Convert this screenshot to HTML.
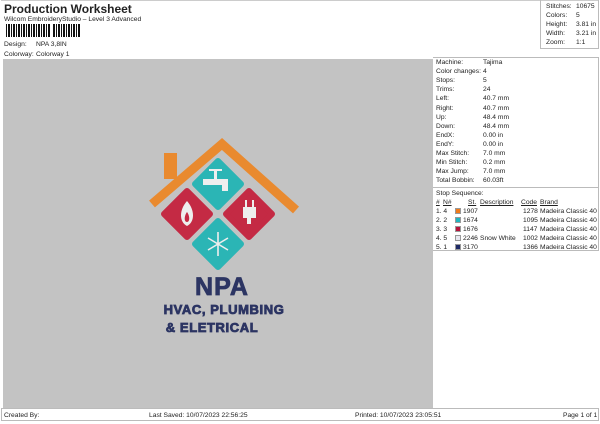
<!DOCTYPE html>
<html><head><meta charset="utf-8"><style>
*{margin:0;padding:0;box-sizing:border-box}
body{width:600px;height:424px;background:#fff;font-family:"Liberation Sans",sans-serif;font-size:6.7px;color:#222;position:relative;overflow:hidden}
.a{position:absolute;white-space:nowrap;line-height:9px}
u{text-decoration:underline}
</style></head><body>
<div class="a" style="left:4px;top:2px;font-size:12px;font-weight:bold;line-height:14px">Production Worksheet</div>
<div class="a" style="left:4px;top:15px">Wilcom EmbroideryStudio – Level 3 Advanced</div>
<div style="position:absolute;left:6px;top:24px;width:74px;height:13px;background:repeating-linear-gradient(90deg,#111 0 1px,#fff 1px 2px,#111 2px 4px,#fff 4px 5px)"></div>
<div style="position:absolute;left:50px;top:24px;width:2px;height:13px;background:#fff"></div>
<div class="a" style="left:4px;top:40px">Design:</div><div class="a" style="left:36px;top:40px">NPA 3,8IN</div>
<div class="a" style="left:4px;top:50px">Colorway:</div><div class="a" style="left:36px;top:50px">Colorway 1</div>
<div style="position:absolute;left:1px;top:0;width:598px;height:1px;background:#ccc"></div>
<div style="position:absolute;left:3px;top:59px;width:430px;height:349px;background:#c3c3c3"></div>
<div style="position:absolute;left:540px;top:0;width:59px;height:49px;border-left:1px solid #bbb;border-right:1px solid #bbb;border-bottom:1px solid #bbb"></div>
<div class="a" style="left:546px;top:2px">Stitches:</div><div class="a" style="left:576px;top:2px">10675</div>
<div class="a" style="left:546px;top:11px">Colors:</div><div class="a" style="left:576px;top:11px">5</div>
<div class="a" style="left:546px;top:20px">Height:</div><div class="a" style="left:576px;top:20px">3.81 in</div>
<div class="a" style="left:546px;top:29px">Width:</div><div class="a" style="left:576px;top:29px">3.21 in</div>
<div class="a" style="left:546px;top:38px">Zoom:</div><div class="a" style="left:576px;top:38px">1:1</div>
<div style="position:absolute;left:433px;top:57px;width:166px;height:1px;background:#bbb"></div>
<div style="position:absolute;left:598px;top:57px;width:1px;height:194px;background:#bbb"></div>
<div style="position:absolute;left:433px;top:187px;width:166px;height:1px;background:#bbb"></div>
<div style="position:absolute;left:433px;top:250px;width:166px;height:1px;background:#bbb"></div>
<div id="m"></div>
<div class="a" style="left:436px;top:189px">Stop Sequence:</div>
<div class="a" style="left:436px;top:198px"><u>#</u></div><div class="a" style="left:443px;top:198px"><u>N#</u></div>
<div class="a" style="left:468px;top:198px"><u>St.</u></div><div class="a" style="left:480px;top:198px"><u>Description</u></div>
<div class="a" style="left:521px;top:198px"><u>Code</u></div><div class="a" style="left:540px;top:198px"><u>Brand</u></div>
<script>
var L=[["Machine:","Tajima"],["Color changes:","4"],["Stops:","5"],["Trims:","24"],["Left:","40.7 mm"],["Right:","40.7 mm"],["Up:","48.4 mm"],["Down:","48.4 mm"],["EndX:","0.00 in"],["EndY:","0.00 in"],["Max Stitch:","7.0 mm"],["Min Stitch:","0.2 mm"],["Max Jump:","7.0 mm"],["Total Bobbin:","60.03ft"]];
var h="";L.forEach(function(r,i){var y=58+i*9.1;h+='<div class="a" style="left:436px;top:'+y+'px">'+r[0]+'</div><div class="a" style="left:483px;top:'+y+'px">'+r[1]+'</div>';});
var S=[["1. 4","#f07a1a","1907","","1278"],["2. 2","#1fb5c0","1674","","1095"],["3. 3","#b5123a","1676","","1147"],["4. 5","#e8e8f0","2246","Snow White","1002"],["5. 1","#1e2a66","3170","","1366"]];
S.forEach(function(r,i){var y=207+i*9;h+='<div class="a" style="left:436px;top:'+y+'px">'+r[0]+'</div><div style="position:absolute;left:455px;top:'+(y+1)+'px;width:6px;height:6px;background:'+r[1]+';border:1px solid #999"></div><div class="a" style="left:463px;top:'+y+'px">'+r[2]+'</div><div class="a" style="left:480px;top:'+y+'px">'+r[3]+'</div><div class="a" style="left:523px;top:'+y+'px">'+r[4]+'</div><div class="a" style="left:540px;top:'+y+'px">Madeira Classic 40</div>';});
document.getElementById("m").outerHTML=h;
</script>
<svg style="position:absolute;left:0;top:0" width="600" height="424">
<rect x="164" y="153" width="13" height="26" fill="#e98a2f"/>
<g fill="none" stroke="#e98a2f" stroke-width="9">
<path d="M152 204 L222 144 L296 210"/>
</g>
<g stroke-linejoin="round" stroke-width="6">
<path d="M218 161 L241 184 L218 207 L195 184Z" fill="#2bb5b5" stroke="#2bb5b5"/>
<path d="M187 191 L210 214 L187 237 L164 214Z" fill="#c42a44" stroke="#c42a44"/>
<path d="M249 191 L272 214 L249 237 L226 214Z" fill="#c42a44" stroke="#c42a44"/>
<path d="M218 221 L241 244 L218 267 L195 244Z" fill="#2bb5b5" stroke="#2bb5b5"/>
</g>
<g fill="#eee">
<rect x="203" y="179" width="24" height="6"/><rect x="222" y="179" width="6" height="12"/><rect x="214" y="171" width="3" height="8"/><rect x="209" y="169" width="13" height="2"/>
<path d="M187 201 C179 210 179 222 187 226 C195 222 195 210 187 201Z M187 212 C184 216 184 222 187 222 C190 222 190 216 187 212Z" fill-rule="evenodd"/>
<rect x="243" y="207" width="13" height="11"/><rect x="245" y="200" width="2" height="8"/><rect x="252" y="200" width="2" height="8"/><rect x="247" y="218" width="4" height="6"/>
</g>
<g stroke="#eee" stroke-width="1.6">
<path d="M218 232V256M208 238L228 250M208 250L228 238"/>
</g>
<g font-family="'Liberation Sans',sans-serif" font-weight="bold" fill="#2c3563" stroke="#2c3563" stroke-width="0.8" text-anchor="middle">
<text x="222" y="295" font-size="25" letter-spacing="1">NPA</text>
<text x="224" y="314" font-size="13" letter-spacing="0.6">HVAC, PLUMBING</text>
<text x="212" y="332" font-size="13" letter-spacing="0.6">&amp; ELETRICAL</text>
</g>
</svg>
<div style="position:absolute;left:1px;top:408px;width:598px;height:13px;border:1px solid #bbb"></div>
<div class="a" style="left:4px;top:411px">Created By:</div>
<div class="a" style="left:149px;top:411px">Last Saved: 10/07/2023 22:56:25</div>
<div class="a" style="left:355px;top:411px">Printed: 10/07/2023 23:05:51</div>
<div class="a" style="left:563px;top:411px">Page 1 of 1</div>
</body></html>
